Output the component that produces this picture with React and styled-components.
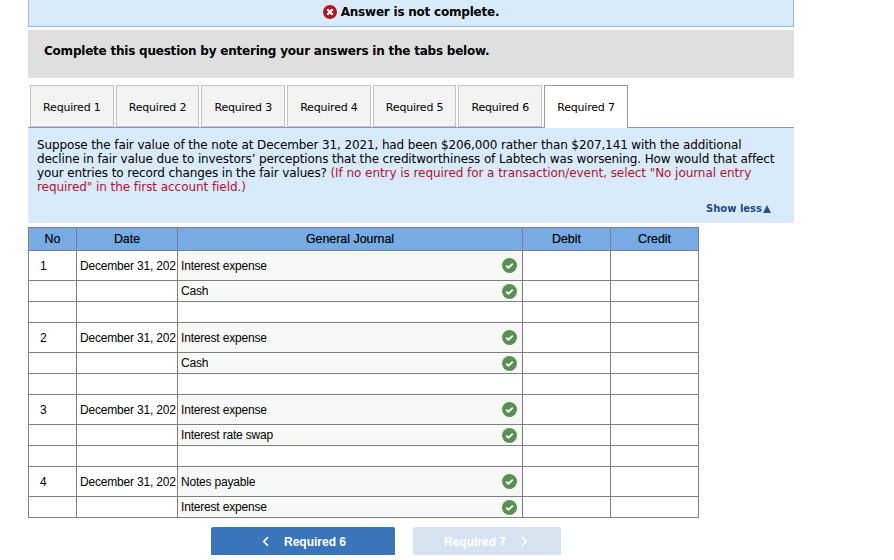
import { Fragment } from 'react'
import styled, { createGlobalStyle } from 'styled-components'
import { FaChevronLeft, FaChevronRight } from 'react-icons/fa'

const GlobalStyle = createGlobalStyle`
    html, body {
        margin: 0;
        padding: 0;
        background: #fff;
        overflow: hidden;
    }
`

const Page = styled.div`
    width: 766px;
    height: 560px;
    margin-left: 28px;
    color: #000;
    font-family: 'DejaVu Sans', Verdana, sans-serif;
    font-size: 12px;
`

const Banner = styled.div`
    height: 27px;
    box-sizing: border-box;
    padding-bottom: 3px;
    display: flex;
    align-items: center;
    justify-content: center;
    gap: 4px;
    background: #d9ebfa;
    border: 1px solid #8fb8e2;
    border-top: none;
    font-weight: 700;
    letter-spacing: -0.22px;
`

const Instruction = styled.div`
    height: 48px;
    margin-top: 3px;
    box-sizing: border-box;
    padding: 14px 16px 0;
    background: #dfdfdf;
    font-weight: 700;
    letter-spacing: -0.22px;
`

const TabBar = styled.div`
    display: flex;
    gap: 2px;
    height: 43px;
    margin-top: 7px;
    box-sizing: border-box;
    padding-left: 2px;
    border-bottom: 1px solid #8b98a5;
`

const Tab = styled.div`
    width: 83.7px;
    height: ${(p) => (p.$active ? '43px' : '42px')};
    box-sizing: border-box;
    padding-top: 2px;
    padding-bottom: ${(p) => (p.$active ? '1px' : '0')};
    display: flex;
    align-items: center;
    justify-content: center;
    background: ${(p) => (p.$active ? '#fff' : '#f3f3f3')};
    border: 1px solid ${(p) => (p.$active ? '#999' : '#c4c4c4')};
    border-bottom: ${(p) => (p.$active ? 'none' : undefined)};
    font-size: 11px;
    letter-spacing: -0.2px;
`

const Panel = styled.div`
    position: relative;
    height: 95px;
    box-sizing: border-box;
    padding: 10px 14px 0 9px;
    background: #d9ebfa;
    line-height: 14px;
    letter-spacing: -0.12px;
`

const Hint = styled.span`
    color: #b1122e;
    letter-spacing: -0.06px;
`

const ShowLess = styled.div`
    position: absolute;
    right: 23px;
    bottom: 7px;
    display: flex;
    align-items: center;
    gap: 1px;
    color: #24487d;
    font-size: 10px;
    font-weight: 700;
    letter-spacing: 0;
`

const Triangle = styled.span`
    width: 0;
    height: 0;
    border-left: 4px solid transparent;
    border-right: 4px solid transparent;
    border-bottom: 8px solid #1f5590;
`

const Journal = styled.table`
    margin-top: 4px;
    width: 671px;
    table-layout: fixed;
    border-collapse: collapse;
    font-family: 'Liberation Sans', Arial, sans-serif;
    font-size: 12px;
    letter-spacing: -0.19px;
`

const HeadCell = styled.th`
    width: ${(p) => p.$width}px;
    height: 23px;
    box-sizing: border-box;
    padding: 0;
    background: #78abe4;
    border: 1px solid #7f7f7f;
    font-size: 12.4px;
    font-weight: 400;
    letter-spacing: 0;
    text-align: center;
    -webkit-text-stroke: 0.2px #000;
`

const Cell = styled.td`
    height: ${(p) => p.$height}px;
    box-sizing: border-box;
    padding: 0 ${(p) => (p.$account ? '2px 0 3px' : '0')};
    border: 1px solid #7f7f7f;
    background: ${(p) => (p.$account && p.$filled ? '#f7f9f6' : '#fff')};
    white-space: nowrap;
    overflow: hidden;
`

const EntryNumber = styled.span`
    display: block;
    padding-left: 11px;
`

const DateText = styled.span`
    display: block;
    padding-left: 3px;
`

const AccountCell = styled.div`
    display: flex;
    align-items: center;
    justify-content: space-between;
    padding-right: 3px;
`

const NavRow = styled.div`
    display: flex;
    gap: 18px;
    margin: 9px 0 0 183px;
`

const NavButton = styled.div`
    width: ${(p) => p.$width}px;
    height: 28px;
    box-sizing: border-box;
    padding-top: 1px;
    display: flex;
    align-items: center;
    justify-content: center;
    gap: 13px;
    border-radius: 2px 2px 0 0;
    background: ${(p) => (p.$disabled ? '#d8e3f1' : '#3a75ba')};
    color: #fff;
    font-family: 'Liberation Sans', Arial, sans-serif;
    font-size: 12px;
    font-weight: 700;
`

const CheckIcon = () => (
    <svg width="15" height="15" viewBox="0 0 15 15" aria-hidden="true">
        <circle cx="7.5" cy="7.5" r="7.5" fill="#5b8f56" />
        <path d="M4.2 7.8 6.5 9.8 10.8 5.6" fill="none" stroke="#fff" strokeWidth="1.9" />
    </svg>
)

const CrossIcon = () => (
    <svg width="14" height="14" viewBox="0 0 14 14" aria-hidden="true">
        <circle cx="7" cy="7" r="7" fill="#b3141f" />
        <path d="M4.3 4.3 9.7 9.7M9.7 4.3 4.3 9.7" stroke="#fff" strokeWidth="2.2" />
    </svg>
)

const tabs = [1, 2, 3, 4, 5, 6, 7]

const entries = [
    { no: 1, debit: 'Interest expense', credit: 'Cash' },
    { no: 2, debit: 'Interest expense', credit: 'Cash' },
    { no: 3, debit: 'Interest expense', credit: 'Interest rate swap' },
    { no: 4, debit: 'Notes payable', credit: 'Interest expense', last: true },
]

function Entry({ no, debit, credit, last }) {
    return (
        <Fragment>
            <tr>
                <Cell $height={30}><EntryNumber>{no}</EntryNumber></Cell>
                <Cell $height={30}><DateText>December 31, 202</DateText></Cell>
                <Cell $height={30} $account $filled>
                    <AccountCell>{debit}<CheckIcon /></AccountCell>
                </Cell>
                <Cell $height={30} />
                <Cell $height={30} />
            </tr>
            <tr>
                <Cell $height={21} />
                <Cell $height={21} />
                <Cell $height={21} $account $filled>
                    <AccountCell>{credit}<CheckIcon /></AccountCell>
                </Cell>
                <Cell $height={21} />
                <Cell $height={21} />
            </tr>
            {!last && (
                <tr>
                    <Cell $height={21} />
                    <Cell $height={21} />
                    <Cell $height={21} $account />
                    <Cell $height={21} />
                    <Cell $height={21} />
                </tr>
            )}
        </Fragment>
    )
}

function App() {
    return (
        <Page>
            <GlobalStyle />
            <Banner><CrossIcon /> Answer is not complete.</Banner>
            <Instruction>Complete this question by entering your answers in the tabs below.</Instruction>
            <TabBar>
                {tabs.map((n) => (
                    <Tab key={n} $active={n === 7}>Required {n}</Tab>
                ))}
            </TabBar>
            <Panel>
                Suppose the fair value of the note at December 31, 2021, had been $206,000 rather than $207,141 with the additional
                decline in fair value due to investors’ perceptions that the creditworthiness of Labtech was worsening. How would that affect
                your entries to record changes in the fair values?{' '}
                <Hint>(If no entry is required for a transaction/event, select "No journal entry required" in the first account field.)</Hint>
                <ShowLess>Show less<Triangle /></ShowLess>
            </Panel>
            <Journal>
                <thead>
                    <tr>
                        <HeadCell $width={48}>No</HeadCell>
                        <HeadCell $width={101}>Date</HeadCell>
                        <HeadCell $width={345}>General Journal</HeadCell>
                        <HeadCell $width={88}>Debit</HeadCell>
                        <HeadCell $width={88}>Credit</HeadCell>
                    </tr>
                </thead>
                <tbody>
                    {entries.map((e) => (
                        <Entry key={e.no} {...e} />
                    ))}
                </tbody>
            </Journal>
            <NavRow>
                <NavButton $width={184}><FaChevronLeft size={11} /> Required 6</NavButton>
                <NavButton $width={148} $disabled>Required 7 <FaChevronRight size={11} /></NavButton>
            </NavRow>
        </Page>
    )
}

export default App
